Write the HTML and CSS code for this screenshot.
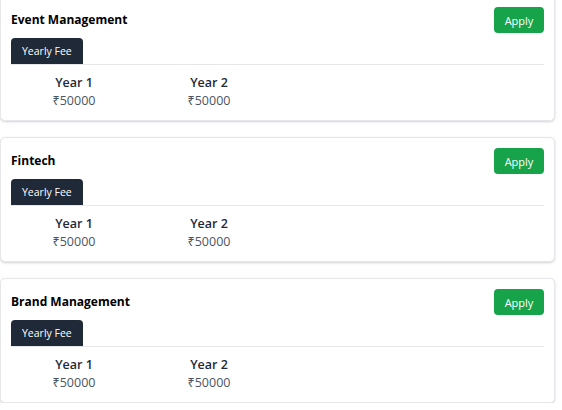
FILE: index.html
```html
<!DOCTYPE html>
<html lang="en">
<head>
<meta charset="utf-8">
<link rel="stylesheet" href="styles.css">
</head>
<body>
<div class="list">
  <div class="card">
    <div class="card-head">
      <h3 class="title">Event Management</h3>
      <button class="apply">Apply</button>
    </div>
    <div class="tabs"><span class="tab">Yearly Fee</span></div>
    <div class="fees">
      <div class="fee"><div class="year">Year 1</div><div class="amt">₹50000</div></div>
      <div class="fee"><div class="year">Year 2</div><div class="amt">₹50000</div></div>
    </div>
  </div>
  <div class="card">
    <div class="card-head">
      <h3 class="title">Fintech</h3>
      <button class="apply">Apply</button>
    </div>
    <div class="tabs"><span class="tab">Yearly Fee</span></div>
    <div class="fees">
      <div class="fee"><div class="year">Year 1</div><div class="amt">₹50000</div></div>
      <div class="fee"><div class="year">Year 2</div><div class="amt">₹50000</div></div>
    </div>
  </div>
  <div class="card">
    <div class="card-head">
      <h3 class="title">Brand Management</h3>
      <button class="apply">Apply</button>
    </div>
    <div class="tabs"><span class="tab">Yearly Fee</span></div>
    <div class="fees">
      <div class="fee"><div class="year">Year 1</div><div class="amt">₹50000</div></div>
      <div class="fee"><div class="year">Year 2</div><div class="amt">₹50000</div></div>
    </div>
  </div>
</div>
</body>
</html>
```
FILE: styles.css
```css
* { box-sizing: border-box; }
html, body { margin: 0; padding: 0; background: #fff; }
body {
  font-family: "Open Sans", "Noto Sans", sans-serif;
  color: #111827;
  overflow: hidden;
}
.list {
  display: flex;
  flex-direction: column;
  gap: 16px;
  margin-top: -4px;
  width: 555px;
}
.card {
  background: #fff;
  border: 1px solid #e5e7eb;
  border-radius: 5px;
  box-shadow: 0 1px 3px rgba(0,0,0,0.12), 0 1px 2px rgba(0,0,0,0.06);
  padding: 10px;
  height: 125px;
}
.card-head {
  display: flex;
  justify-content: space-between;
  align-items: center;
  height: 26px;
}
.title {
  margin: 0 0 1px;
  font-size: 12px;
  font-weight: 700;
  color: #000;
}
.apply {
  width: 50px;
  height: 26px;
  border: none;
  border-radius: 4px;
  background: #16a34a;
  color: #fff;
  font-family: inherit;
  font-size: 11px;
  padding: 0;
}
.tabs {
  margin-top: 5px;
  border-bottom: 1px solid #e5e7eb;
  display: flex;
}
.tab {
  display: flex;
  align-items: center;
  height: 26px;
  padding: 0 11px;
  background: #1f2937;
  color: #fff;
  font-size: 10.5px;
  border-radius: 4px 4px 0 0;
}
.fees {
  display: flex;
  gap: 9px;
  padding-top: 9px;
}
.fee {
  width: 126px;
  text-align: center;
  line-height: 18px;
}
.year {
  font-size: 12.5px;
  font-weight: 600;
  color: #1f2937;
}
.amt {
  font-size: 12.5px;
  color: #4b5563;
}
```
